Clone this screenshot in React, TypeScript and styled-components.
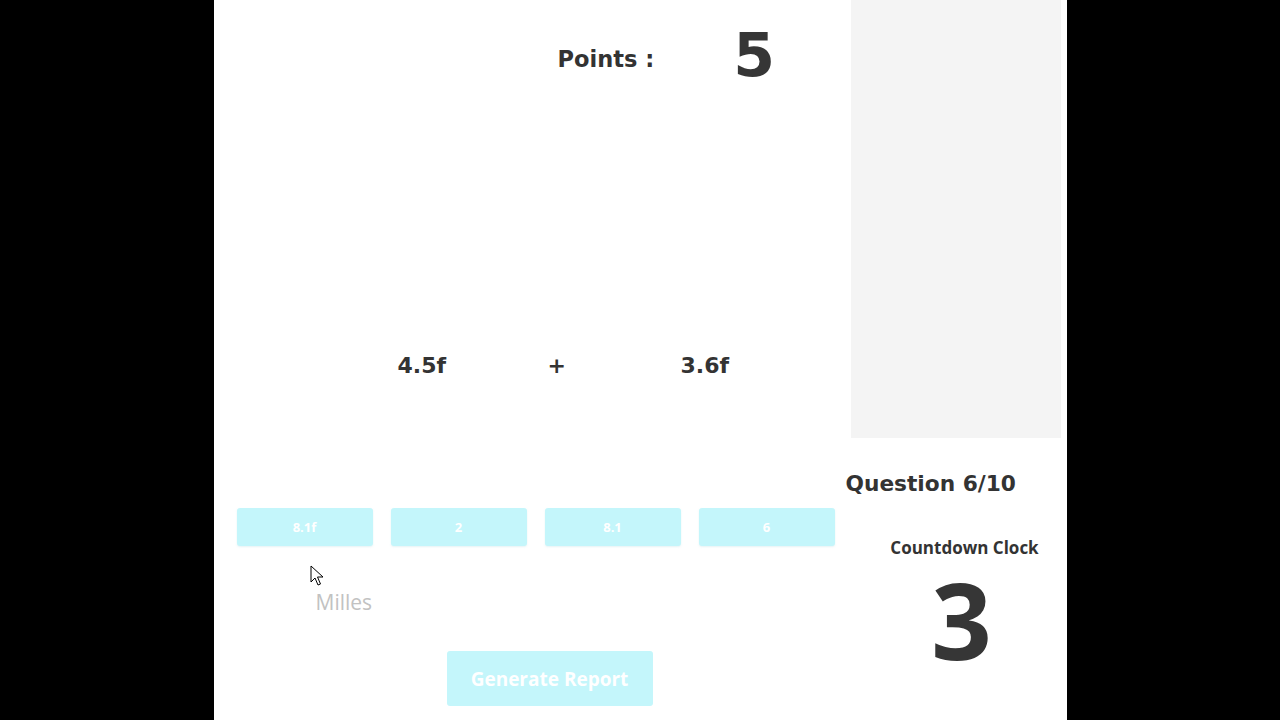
import React from 'react';
import styled, { createGlobalStyle } from 'styled-components';

const GlobalStyle = createGlobalStyle`
  html, body {
    margin: 0;
    padding: 0;
    background: #000;
  }
`;

const Page = styled.div`
  position: relative;
  width: 853px;
  min-height: 720px;
  margin: 0 auto;
  background: #fff;
  display: grid;
  grid-template-columns: 637px 216px;
  overflow: hidden;
`;

const Main = styled.div`
  display: flex;
  flex-direction: column;
`;

const Header = styled.div`
  display: flex;
  align-items: flex-start;
  padding-left: 344px;
`;

const PointsLabel = styled.div`
  margin-top: 48px;
  font-family: 'DejaVu Sans', Verdana, sans-serif;
  font-weight: 700;
  font-size: 22.5px;
  line-height: 1;
  color: #333;
`;

const PointsValue = styled.div`
  margin-top: 25px;
  margin-left: 79px;
  font-family: 'DejaVu Sans', Verdana, sans-serif;
  font-weight: 700;
  font-size: 60px;
  line-height: 1;
  color: #363636;
`;

const Equation = styled.div`
  display: flex;
  margin-top: 270px;
  padding-left: 184px;
`;

const Term = styled.div<{ $width?: number }>`
  width: ${(p) => (p.$width ? `${p.$width}px` : 'auto')};
  font-family: 'DejaVu Sans', Verdana, sans-serif;
  font-weight: 700;
  font-size: 22px;
  line-height: 1;
  color: #333;
`;

const Choices = styled.div`
  display: flex;
  gap: 18px;
  margin-top: 131px;
  padding-left: 23px;
`;

const Choice = styled.button`
  width: 136px;
  height: 38px;
  border: none;
  border-radius: 3px;
  background: #c4f6fb;
  box-shadow: 0 1px 2px rgba(180, 220, 225, 0.35);
  color: #fff;
  font-family: 'Open Sans', sans-serif;
  font-weight: 700;
  font-size: 13px;
  padding: 0;
  cursor: pointer;
`;

const Hint = styled.div`
  margin-top: 46px;
  padding-left: 102px;
  font-family: 'Open Sans', sans-serif;
  font-size: 21px;
  line-height: 1;
  color: #c2c2c2;
`;

const ReportButton = styled.button`
  align-self: flex-start;
  margin-top: 38px;
  margin-left: 233px;
  width: 206px;
  height: 55px;
  border: none;
  border-radius: 3px;
  background: #c4f6fb;
  color: #fff;
  font-family: 'Open Sans', sans-serif;
  font-weight: 700;
  font-size: 19px;
  padding: 0;
  cursor: pointer;
`;

const Side = styled.div`
  display: flex;
  flex-direction: column;
`;

const Panel = styled.div`
  width: 210px;
  height: 438px;
  background: #f4f4f4;
`;

const QuestionCount = styled.div`
  margin-top: 35px;
  margin-left: -5px;
  font-family: 'DejaVu Sans', Verdana, sans-serif;
  font-weight: 700;
  font-size: 21.7px;
  line-height: 1;
  color: #333;
`;

const ClockTitle = styled.div`
  margin-top: 44px;
  padding-left: 12px;
  text-align: center;
  font-family: 'Open Sans', sans-serif;
  font-weight: 700;
  font-size: 17px;
  line-height: 1;
  color: #333;
`;

const ClockValue = styled.div`
  margin-top: 21px;
  padding-left: 6px;
  text-align: center;
  font-family: 'Open Sans', sans-serif;
  font-weight: 700;
  font-size: 106px;
  line-height: 0.8;
  color: #363636;
`;

const Pointer = styled.svg`
  position: absolute;
  left: 96px;
  top: 565px;
  pointer-events: none;
`;

const choices = ['8.1f', '2', '8.1', '6'];

export default function App() {
  return (
    <>
      <GlobalStyle />
      <Page>
        <Main>
          <Header>
            <PointsLabel>Points :</PointsLabel>
            <PointsValue>5</PointsValue>
          </Header>
          <Equation>
            <Term $width={150}>4.5f</Term>
            <Term $width={133}>+</Term>
            <Term>3.6f</Term>
          </Equation>
          <Choices>
            {choices.map((c) => (
              <Choice key={c}>{c}</Choice>
            ))}
          </Choices>
          <Hint>Milles</Hint>
          <ReportButton>Generate Report</ReportButton>
        </Main>
        <Side>
          <Panel />
          <QuestionCount>Question 6/10</QuestionCount>
          <ClockTitle>Countdown Clock</ClockTitle>
          <ClockValue>3</ClockValue>
        </Side>
        <Pointer width="14" height="22" viewBox="0 0 14 22">
          <path
            d="M1 1 L1 17 L5 13 L8 20 L10.5 19 L7.5 12 L13 12 Z"
            fill="#fff"
            stroke="#000"
            strokeWidth="1"
            strokeLinejoin="round"
          />
        </Pointer>
      </Page>
    </>
  );
}
